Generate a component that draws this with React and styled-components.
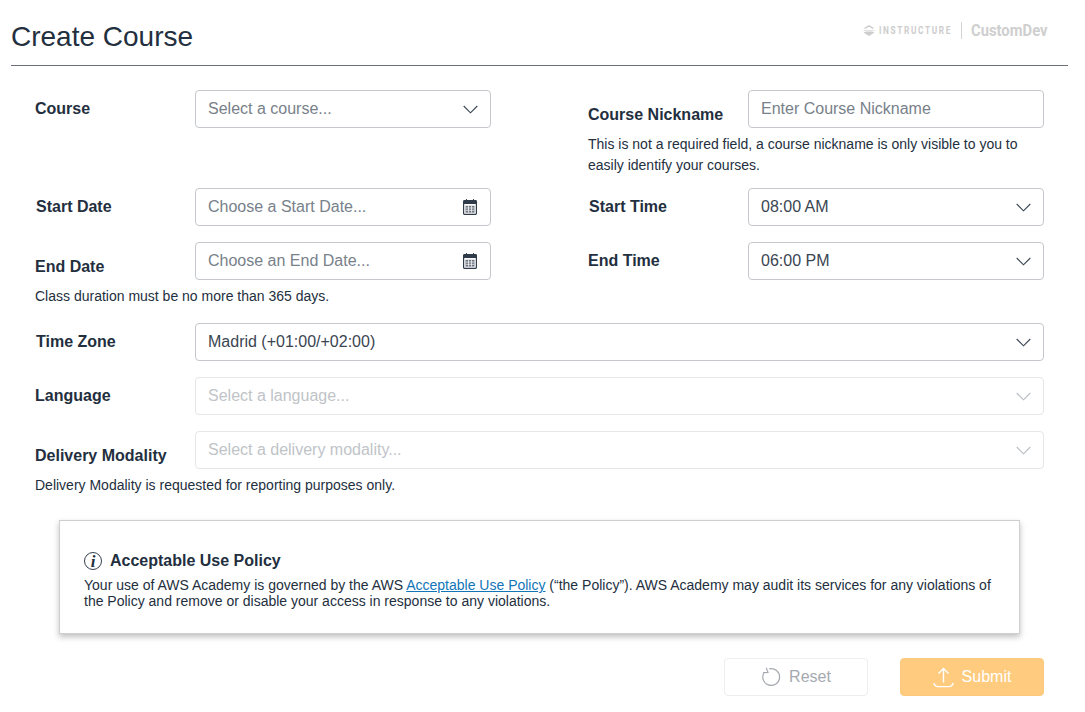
import React from "react";
import styled, { createGlobalStyle } from "styled-components";

const Global = createGlobalStyle`
  html, body { margin: 0; padding: 0; background: #fff; }
  body { font-family: "Liberation Sans", Arial, sans-serif; color: #232f3e; }
  * { box-sizing: border-box; }
`;

const Page = styled.div`
  width: 1085px;
  height: 712px;
  padding: 0 17px 0 11px;
  overflow: hidden;
`;

const Header = styled.header`
  height: 66px;
  border-bottom: 1px solid #6c7178;
  display: flex;
  justify-content: space-between;
  padding-top: 20px;
`;

const Title = styled.h1`
  margin: 0;
  font-size: 28px;
  line-height: 34px;
  font-weight: 400;
  color: #232f3e;
`;

const Logo = styled.div`
  display: flex;
  align-items: center;
  height: 20px;
  margin: 0 20px 0 0;
`;

const LogoSmall = styled.span`
  display: inline-block;
  width: 74px;
  font-family: "Roboto", sans-serif;
  font-weight: 700;
  font-size: 11px;
  letter-spacing: 2.2px;
  margin-left: 4px;
  white-space: nowrap;
  transform: scaleX(0.75);
  transform-origin: left center;
  color: #cdcdcd;
`;

const LogoRule = styled.span`
  width: 1px;
  height: 17px;
  background: #d4d4d4;
  margin: 0 9px 0 8px;
`;

const LogoBig = styled.span`
  display: inline-block;
  width: 77px;
  font-family: "Roboto", sans-serif;
  font-weight: 700;
  font-size: 17px;
  white-space: nowrap;
  transform: scaleX(0.87);
  transform-origin: left center;
  color: #cfcfcf;
`;

const Form = styled.div`
  padding: 24px 24px 0 24px;
`;

const Columns = styled.div`
  display: grid;
  grid-template-columns: 456px 456px;
  column-gap: 97px;
`;

const Row = styled.div`
  display: flex;
  align-items: center;
  height: 38px;
  margin-top: ${(p) => p.$top || 0}px;
`;

const Label = styled.label`
  flex: 0 0 ${(p) => 160 - (p.$left || 0)}px;
  margin-left: ${(p) => p.$left || 0}px;
  margin-top: ${(p) => p.$down || 0}px;
  font-size: 16px;
  font-weight: 700;
  color: #232f3e;
`;

const Field = styled.div`
  flex: 1;
  height: 38px;
  display: flex;
  align-items: center;
  justify-content: space-between;
  padding: 0 12px;
  border: 1px solid ${(p) => (p.$disabled ? "#e4e6e8" : "#c4c8cc")};
  border-radius: 4px;
  background: #fff;
  font-size: 16px;
  color: ${(p) => (p.$disabled ? "#c0c4c8" : p.$muted ? "#78818a" : "#3a4552")};
`;

const Help = styled.p`
  margin: ${(p) => p.$top || 0}px 0 0;
  font-size: 14px;
  line-height: 21px;
  color: #232f3e;
`;

const Policy = styled.section`
  width: 961px;
  height: 114px;
  margin: 24px 0 0 24px;
  padding: 30px 24px 0;
  border: 1px solid #cfcfcf;
  box-shadow: 0 3px 6px rgba(0, 0, 0, 0.25);
  background: #fff;
`;

const PolicyTitle = styled.h2`
  display: flex;
  align-items: center;
  gap: 8px;
  margin: 0 0 6px;
  font-size: 16px;
  line-height: 20px;
  font-weight: 700;
  color: #232f3e;
`;

const InfoBadge = styled.span`
  width: 18px;
  height: 18px;
  border: 1.4px solid #333f4d;
  border-radius: 50%;
  display: flex;
  align-items: center;
  justify-content: center;
  font-family: "Liberation Serif", serif;
  font-style: italic;
  font-weight: 700;
  font-size: 17px;
  line-height: 1;
  color: #232f3e;
`;

const PolicyText = styled.p`
  margin: 0;
  font-size: 14px;
  line-height: 16px;
  color: #232f3e;
`;

const PolicyLink = styled.a`
  color: #1275b8;
  text-decoration: underline;
`;

const Actions = styled.div`
  display: flex;
  justify-content: flex-end;
  gap: 32px;
  margin-top: 24px;
`;

const Button = styled.button`
  width: 144px;
  height: 38px;
  display: flex;
  align-items: center;
  justify-content: center;
  gap: 8px;
  border-radius: 4px;
  font-family: inherit;
  font-size: 16px;
  border: 1px solid ${(p) => (p.$primary ? "#fbc97e" : "#eceef0")};
  background: ${(p) => (p.$primary ? "#fecb7f" : "#fff")};
  color: ${(p) => (p.$primary ? "#fff" : "#a5aab0")};
`;

const ChevronSvg = styled.svg`
  flex: none;
`;

const CalendarSvg = styled.svg`
  flex: none;
  margin-right: 1px;
`;

const Chevron = ({ light }) => (
  <ChevronSvg width="15" height="9" viewBox="0 0 15 9" fill="none">
    <path d="M0.7 1 L7.5 7.8 L14.3 1" stroke={light ? "#b9bdc2" : "#3a4552"} strokeWidth="1.1" />
  </ChevronSvg>
);

const Calendar = () => (
  <CalendarSvg width="14" height="16" viewBox="0 0 14 16" fill="none">
    <path d="M3.5 0V2.5M10.5 0V2.5" stroke="#3a4552" strokeWidth="1" />
    <rect x="0.6" y="1.6" width="12.8" height="13.8" rx="0.8" stroke="#2f3b49" strokeWidth="1.2" />
    <rect x="1" y="2" width="12" height="3" fill="#2f3b49" />
    <rect x="2.5" y="6.8" width="9" height="6.8" fill="#6d7681" />
    <path d="M2.5 9H11.5M2.5 11.3H11.5M5.5 6.8V13.6M8.5 6.8V13.6" stroke="#fff" strokeWidth="0.7" />
  </CalendarSvg>
);

const InstructureMark = () => (
  <svg width="12" height="11" viewBox="0 0 12 11" fill="#cdcdcd">
    <path d="M6 0 L11 3 L9.8 4 L6 1.8 L2.2 4 L1 3 Z" />
    <path d="M0.5 5 H11.5 V5.6 H0.5 Z" />
    <path d="M6 11 L11.5 7.6 L9 6.4 H3 L0.5 7.6 Z" />
  </svg>
);

const ResetIcon = () => (
  <svg width="20" height="20" viewBox="0 0 20 20" fill="none" stroke="#a5aab0" strokeWidth="1.2">
    <path d="M8.2 1.8 A8.4 8.4 0 1 1 3.4 5" />
    <path d="M5.2 0.8 L7 5.4 L2.2 5.6" />
  </svg>
);

const UploadIcon = () => (
  <svg width="21" height="21" viewBox="0 0 21 21" fill="none" stroke="#fff" strokeWidth="1.4">
    <path d="M10.5 15.5V1.5M5.5 6.5L10.5 1.5L15.5 6.5" />
    <path d="M0.8 16 C1.5 18.5 2.5 19.6 5 19.6 H16 C18.5 19.6 19.5 18.5 20.2 16" />
  </svg>
);

export default function App() {
  return (
    <Page>
      <Global />
      <Header>
        <Title>Create Course</Title>
        <Logo>
          <InstructureMark />
          <LogoSmall>INSTRUCTURE</LogoSmall>
          <LogoRule />
          <LogoBig>CustomDev</LogoBig>
        </Logo>
      </Header>
      <Form>
        <Columns>
          <div>
            <Row>
              <Label>Course</Label>
              <Field $muted>Select a course...<Chevron /></Field>
            </Row>
            <Row $top={60}>
              <Label $left={1}>Start Date</Label>
              <Field $muted>Choose a Start Date...<Calendar /></Field>
            </Row>
            <Row $top={16}>
              <Label $down={12}>End Date</Label>
              <Field $muted>Choose an End Date...<Calendar /></Field>
            </Row>
            <Help $top={6}>Class duration must be no more than 365 days.</Help>
          </div>
          <div>
            <Row>
              <Label $down={12}>Course Nickname</Label>
              <Field $muted>Enter Course Nickname</Field>
            </Row>
            <Help $top={6}>
              This is not a required field, a course nickname is only visible to you to easily identify your courses.
            </Help>
            <Row $top={12}>
              <Label $left={1}>Start Time</Label>
              <Field>08:00 AM<Chevron /></Field>
            </Row>
            <Row $top={16}>
              <Label>End Time</Label>
              <Field>06:00 PM<Chevron /></Field>
            </Row>
          </div>
        </Columns>
        <Row $top={16}>
          <Label $left={1}>Time Zone</Label>
          <Field>Madrid (+01:00/+02:00)<Chevron /></Field>
        </Row>
        <Row $top={16}>
          <Label>Language</Label>
          <Field $disabled>Select a language...<Chevron light /></Field>
        </Row>
        <Row $top={16}>
          <Label $down={12}>Delivery Modality</Label>
          <Field $disabled>Select a delivery modality...<Chevron light /></Field>
        </Row>
        <Help $top={6}>Delivery Modality is requested for reporting purposes only.</Help>
        <Policy>
          <PolicyTitle>
            <InfoBadge>i</InfoBadge>
            Acceptable Use Policy
          </PolicyTitle>
          <PolicyText>
            Your use of AWS Academy is governed by the AWS <PolicyLink href="#">Acceptable Use Policy</PolicyLink> (“the Policy”). AWS Academy may audit its services for any violations of the Policy and remove or disable your access in response to any violations.
          </PolicyText>
        </Policy>
        <Actions>
          <Button><ResetIcon />Reset</Button>
          <Button $primary><UploadIcon />Submit</Button>
        </Actions>
      </Form>
    </Page>
  );
}
